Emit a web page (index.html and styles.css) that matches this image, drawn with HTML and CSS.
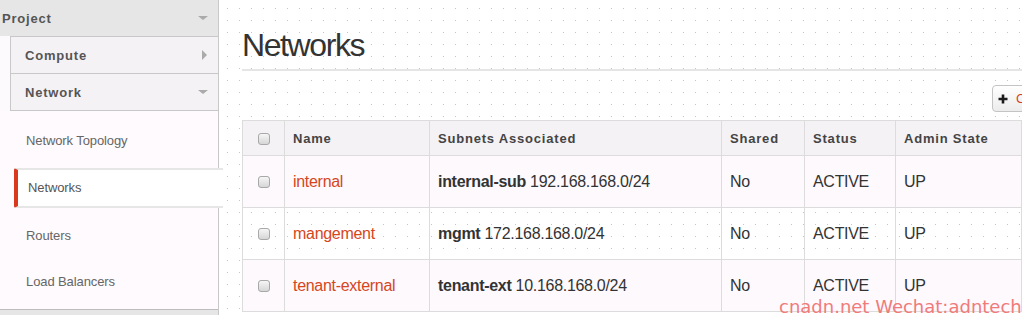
FILE: index.html
```html
<!DOCTYPE html>
<html lang="en">
<head>
    <meta charset="UTF-8">
    <title>Networks</title>
    <link rel="stylesheet" href="styles.css">
</head>
<body>

<div class="page">
    <div class="side">
        <div class="proj">
            <span>Project</span>
            <i class="arr-down"></i>
        </div>
        <div class="group">
            <div class="sub">
                <span>Compute</span>
                <i class="arr-right"></i>
            </div>
            <div class="sub sub-last">
                <span>Network</span>
                <i class="arr-down"></i>
            </div>
        </div>
        <ul class="menu">
            <li>Network Topology</li>
            <li class="active">Networks</li>
            <li>Routers</li>
            <li>Load Balancers</li>
        </ul>
    </div>

    <div class="main">
        <h1 class="title">Networks</h1>

        <div class="tools">
            <button class="btn" type="button">
                <svg class="plus" width="10" height="10" viewBox="0 0 10 10">
                    <path d="M5 0.5V9.5M0.5 5H9.5" stroke="#1a1a1a" stroke-width="2.6"/>
                </svg>
                Create Network
            </button>
        </div>

        <table class="list">
            <colgroup>
                <col style="width: 42px">
                <col style="width: 145px">
                <col style="width: 292px">
                <col style="width: 83px">
                <col style="width: 91px">
                <col style="width: 126px">
            </colgroup>
            <thead>
            <tr>
                <th class="chk"><span class="box"></span></th>
                <th>Name</th>
                <th>Subnets Associated</th>
                <th>Shared</th>
                <th>Status</th>
                <th>Admin State</th>
            </tr>
            </thead>
            <tbody>
            <tr>
                <td class="chk"><span class="box"></span></td>
                <td><a href="#" class="link">internal</a></td>
                <td><b>internal-sub</b> 192.168.168.0/24</td>
                <td>No</td>
                <td>ACTIVE</td>
                <td>UP</td>
            </tr>
            <tr>
                <td class="chk"><span class="box"></span></td>
                <td><a href="#" class="link">mangement</a></td>
                <td><b>mgmt</b> 172.168.168.0/24</td>
                <td>No</td>
                <td>ACTIVE</td>
                <td>UP</td>
            </tr>
            <tr>
                <td class="chk"><span class="box"></span></td>
                <td><a href="#" class="link">tenant-external</a></td>
                <td><b>tenant-ext</b> 10.168.168.0/24</td>
                <td>No</td>
                <td>ACTIVE</td>
                <td>UP</td>
            </tr>
            </tbody>
        </table>
    </div>
</div>

<div class="mark">cnadn.net Wechat:adntech</div>

</body>
</html>
```

FILE: styles.css
```css
*{
    padding: 0;
    margin: 0;
    box-sizing: border-box;
}
body {
    font-family: "Liberation Sans", Arial, sans-serif;
    overflow: hidden;
    height: 315px;
    background-color: #fff;
    /* dotted canvas: 1px dot every 12px */
    background-image:
        linear-gradient(90deg, #fff 11px, transparent 11px),
        linear-gradient(#fff 11px, #c4c4c4 11px);
    background-size: 12px 12px;
    background-position: 0 9px;
}

.page{
    display: flex;
    height: 315px;
}

/* sidebar */
.side{
    width: 219px;
    flex-shrink: 0;
    height: 315px;
    background-color: #e6e6e6;
    border-right: 1px solid #c8c8c8;
    display: flex;
    flex-direction: column;
}

.proj, .sub{
    display: flex;
    align-items: center;
    justify-content: space-between;
    font-size: 13px;
    font-weight: bold;
    letter-spacing: 0.8px;
    color: #555;
    padding-right: 10px;
}

.proj{
    height: 36px;
    padding-left: 2px;
    background-color: #e6e6e6;
}

.group{
    background-color: #fcfafc;
    padding-left: 10px;
}

.sub{
    height: 37px;
    padding-left: 14px;
    background-color: #f5f2f5;
    border-top: 1px solid #c8c8c8;
    border-left: 1px solid #c8c8c8;
}

.sub-last{
    height: 38px;
    border-bottom: 1px solid #c8c8c8;
}

.arr-down{
    width: 0;
    height: 0;
    border-left: 5px solid transparent;
    border-right: 5px solid transparent;
    border-top: 4px solid #aaa;
}

.arr-right{
    width: 0;
    height: 0;
    border-top: 5px solid transparent;
    border-bottom: 5px solid transparent;
    border-left: 5px solid #aaa;
    margin-right: 1px;
}

.menu{
    list-style: none;
    background-color: #fefafd;
    padding: 7px 0 4px 0;
    border-bottom: 1px solid #bdbdbd;
}

.menu li{
    height: 46px;
    line-height: 46px;
    padding-left: 26px;
    font-size: 13px;
    letter-spacing: -0.1px;
    color: #666;
}

.menu .active{
    height: 40px;
    line-height: 36px;
    margin: 4px -5px 5px 14px;
    padding-left: 10px;
    background-color: #fff;
    border-top: 2px solid #e6e6e6;
    border-bottom: 2px solid #e6e6e6;
    border-left: 4px solid #d9391d;
    border-radius: 2px 0 0 2px;
    color: #555;
    position: relative;
}

/* main area */
.main{
    flex: 1;
    padding-left: 23px;
    min-width: 0;
}

.title{
    margin-top: 29px;
    font-size: 32px;
    line-height: 32px;
    font-weight: normal;
    letter-spacing: -1.4px;
    color: #333;
    padding-bottom: 8px;
    border-bottom: 2px solid #e5e5e5;
}

.tools{
    display: flex;
    margin-top: 14px;
    padding-left: 750px;
    height: 26px;
}

.btn{
    flex-shrink: 0;
    display: flex;
    align-items: center;
    gap: 8px;
    height: 27px;
    padding: 0 8px 0 5px;
    white-space: nowrap;
    border: 1px solid #c4c4c4;
    border-radius: 4px;
    background: linear-gradient(#fff, #ececec);
    font-family: "Liberation Sans", Arial, sans-serif;
    font-size: 13px;
    color: #d6461c;
}

.list{
    margin-top: 9px;
    width: 779px;
    table-layout: fixed;
    border-collapse: collapse;
    border: 1px solid #dcdcdc;
}

.list th, .list td{
    border: 1px solid #dcdcdc;
    padding: 0 8px;
    text-align: left;
    vertical-align: middle;
    white-space: nowrap;
}

.list th{
    height: 35px;
    background-color: #f5f2f5;
    font-size: 13px;
    font-weight: bold;
    letter-spacing: 0.8px;
    color: #444;
}

.list td{
    height: 52px;
    font-size: 16px;
    letter-spacing: -0.3px;
    color: #333;
}

.list tbody tr:nth-child(odd){
    background-color: #fdf9fd;
}

.list .chk{
    text-align: center;
    padding: 0;
}

.box{
    display: inline-block;
    width: 12px;
    height: 12px;
    vertical-align: middle;
    border: 1px solid #a9a9a9;
    border-radius: 3px;
    background: linear-gradient(#f6f6f6, #d6d6d6);
}

.link{
    color: #d6461c;
    text-decoration: none;
}

/* watermark over the screenshot */
.mark{
    position: absolute;
    left: 779px;
    top: 298px;
    font-family: "DejaVu Sans", Verdana, sans-serif;
    font-size: 18px;
    line-height: 18px;
    color: #f07b7b;
    white-space: nowrap;
}
```
